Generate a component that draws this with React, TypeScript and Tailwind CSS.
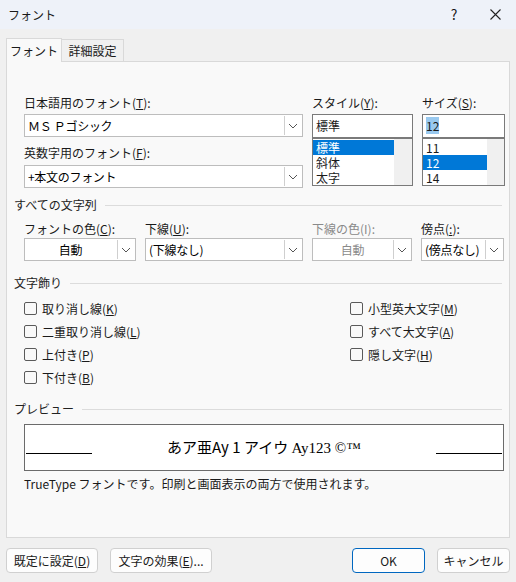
import React from "react";

const F = { fontFamily: '"Noto Sans CJK JP", "Noto Sans", sans-serif' };

function Chevron() {
  return (
    <svg width="10" height="6" viewBox="0 0 10 6"><path d="M1 1l4 4 4-4" fill="none" stroke="#555" strokeWidth="1" /></svg>
  );
}

function Combo({ w, text, center, disabled, btn = 17 }: { w: number; text: string; center?: boolean; disabled?: boolean; btn?: number }) {
  return (
    <div className="flex h-[23px] border border-[#bdbdbd] bg-white" style={{ width: w }}>
      <div className={`flex-1 flex items-center px-[3px] text-[12px] whitespace-nowrap overflow-hidden tracking-[-0.3px] ${center ? "justify-center" : ""} ${disabled ? "text-[#8a8a8a]" : "text-black"}`}>{text}</div>
      <div className="flex items-center justify-center border-l border-[#cfcfcf] m-[1px] bg-white" style={{ width: btn }}>
        <Chevron />
      </div>
    </div>
  );
}

function U({ c }: { c: string }) {
  return <span className="underline">{c}</span>;
}

function Section({ title }: { title: string }) {
  return (
    <div className="flex items-center gap-2 pl-[7px] pr-[7px] h-[18px]">
      <span className="text-[12px] text-[#222]">{title}</span>
      <div className="flex-1 h-px bg-[#dcdcdc]" />
    </div>
  );
}

function Check({ label }: { label: React.ReactNode }) {
  return (
    <div className="flex items-center gap-[5px] h-[23px]">
      <div className="w-[13px] h-[13px] border border-[#5a5a5a] rounded-[2px] bg-[#f9f9f9]" />
      <span className="text-[12px]">{label}</span>
    </div>
  );
}

function ListBox({ w, items, sel, selW }: { w: number; items: string[]; sel: number; selW: number }) {
  return (
    <div className="flex h-[48px] border border-[#7a7a7a] bg-white" style={{ width: w }}>
      <div className="flex-1 pt-[1px]">
        {items.map((it, i) => (
          <div key={i} className={`h-[15px] leading-[15px] px-[3px] text-[12px] ${i === sel ? "bg-[#0078d7] text-white" : ""}`} style={{ width: selW }}>{it}</div>
        ))}
      </div>
      <div className="w-[18px] bg-[#f0f0f0]" />
    </div>
  );
}

function Btn({ w, children, primary }: { w: number; children: React.ReactNode; primary?: boolean }) {
  return (
    <div className={`h-[25px] flex items-center justify-center rounded-[4px] bg-[#fdfdfd] text-[12px] whitespace-nowrap border ${primary ? "border-[#0067c0]" : "border-[#d0d0d0]"}`} style={{ width: w }}>{children}</div>
  );
}

export default function App() {
  return (
    <div className="w-[516px] h-[582px] bg-[#f0f0f0] text-[#1a1a1a] flex flex-col overflow-hidden" style={F}>
      <div className="h-[29px] bg-[#eef2f9] flex items-center pl-[8px] text-[12px]">
        <span className="flex-1">フォント</span>
        <span className="w-[20px] text-center text-[14px] mr-[26px]">?</span>
        <svg width="11" height="11" viewBox="0 0 11 11" className="mr-[15px]"><path d="M0.5 0.5l10 10M10.5 0.5l-10 10" stroke="#222" strokeWidth="1.1" /></svg>
      </div>
      <div className="flex pl-[6px] mt-[8px] h-[24px] items-end">
        <div className="w-[56px] h-[24px] bg-[#f9f9f9] border border-b-0 border-[#d9d9d9] flex items-center justify-center text-[12px] relative top-px z-10">フォント</div>
        <div className="w-[62px] h-[22px] bg-[#f0f0f0] border border-b-0 border-l-0 border-[#d9d9d9] flex items-center justify-center text-[12px]">詳細設定</div>
      </div>
      <div className="mx-[6px] h-[477px] bg-[#f9f9f9] border border-[#d9d9d9] flex flex-col">
        <div className="flex pl-[17px] pt-[30px] gap-[9px]">
          <div className="flex flex-col">
            <div className="text-[12px] h-[22px] leading-[22px]">日本語用のフォント(<U c="T" />):</div>
            <Combo w={279} text="ＭＳ Ｐゴシック" />
            <div className="text-[12px] h-[26px] leading-[28px] mt-[2px]">英数字用のフォント(<U c="F" />):</div>
            <Combo w={279} text="+本文のフォント" />
          </div>
          <div className="flex flex-col">
            <div className="text-[12px] h-[22px] leading-[22px]">スタイル(<U c="Y" />):</div>
            <div className="w-[101px] h-[24px] border border-[#7a7a7a] bg-white text-[12px] px-[3px] leading-[21px]">標準</div>
            <ListBox w={101} items={["標準", "斜体", "太字"]} sel={0} selW={81} />
          </div>
          <div className="flex flex-col">
            <div className="text-[12px] h-[22px] leading-[22px]">サイズ(<U c="S" />):</div>
            <div className="w-[83px] h-[24px] border border-[#7a7a7a] bg-white text-[12px] px-[3px] leading-[21px]"><span className="bg-[#99c9ef]">12</span></div>
            <ListBox w={83} items={["11", "12", "14"]} sel={1} selW={64} />
          </div>
        </div>
        <div className="mt-[8px]"><Section title="すべての文字列" /></div>
        <div className="flex pl-[17px] gap-[9px] mt-[6px]">
          <div><div className="text-[12px] h-[18px] whitespace-nowrap">フォントの色(<U c="C" />):</div><Combo w={112} text="自動" center /></div>
          <div><div className="text-[12px] h-[18px] whitespace-nowrap">下線(<U c="U" />):</div><Combo w={158} text="(下線なし)" /></div>
          <div><div className="text-[12px] h-[18px] whitespace-nowrap text-[#8a8a8a]">下線の色(I):</div><Combo w={100} text="自動" center disabled /></div>
          <div><div className="text-[12px] h-[18px] whitespace-nowrap">傍点(<U c=":" />):</div><Combo w={83} text="(傍点なし)" /></div>
        </div>
        <div className="mt-[13px]"><Section title="文字飾り" /></div>
        <div className="flex pl-[17px] mt-[5px]">
          <div className="w-[326px] flex flex-col">
            <Check label={<>取り消し線(<U c="K" />)</>} />
            <Check label={<>二重取り消し線(<U c="L" />)</>} />
            <Check label={<>上付き(<U c="P" />)</>} />
            <Check label={<>下付き(<U c="B" />)</>} />
          </div>
          <div className="flex flex-col">
            <Check label={<>小型英大文字(<U c="M" />)</>} />
            <Check label={<>すべて大文字(<U c="A" />)</>} />
            <Check label={<>隠し文字(<U c="H" />)</>} />
          </div>
        </div>
        <div className="mt-[11px]"><Section title="プレビュー" /></div>
        <div className="ml-[17px] mt-[6px] w-[480px] h-[47px] bg-white border border-[#6b6b6b] flex items-center">
          <div className="w-[66px] h-px bg-black mt-[12px] ml-[1px]" />
          <div className="flex-1 text-center text-[15px] text-black">あア亜Ay 1 アイウ <span style={{ fontFamily: '"Liberation Serif", serif' }}>Ay123 ©™</span></div>
          <div className="w-[66px] h-px bg-black mt-[12px] mr-[1px]" />
        </div>
        <div className="pl-[17px] mt-[4px] text-[12px]">TrueType フォントです。印刷と画面表示の両方で使用されます。</div>
      </div>
      <div className="flex px-[6px] mt-[10px] gap-[12px]">
        <Btn w={92}>既定に設定(<U c="D" />)</Btn>
        <Btn w={102}>文字の効果(<U c="E" />)...</Btn>
        <div className="flex-1" />
        <Btn w={73} primary>OK</Btn>
        <Btn w={73}>キャンセル</Btn>
      </div>
    </div>
  );
}
